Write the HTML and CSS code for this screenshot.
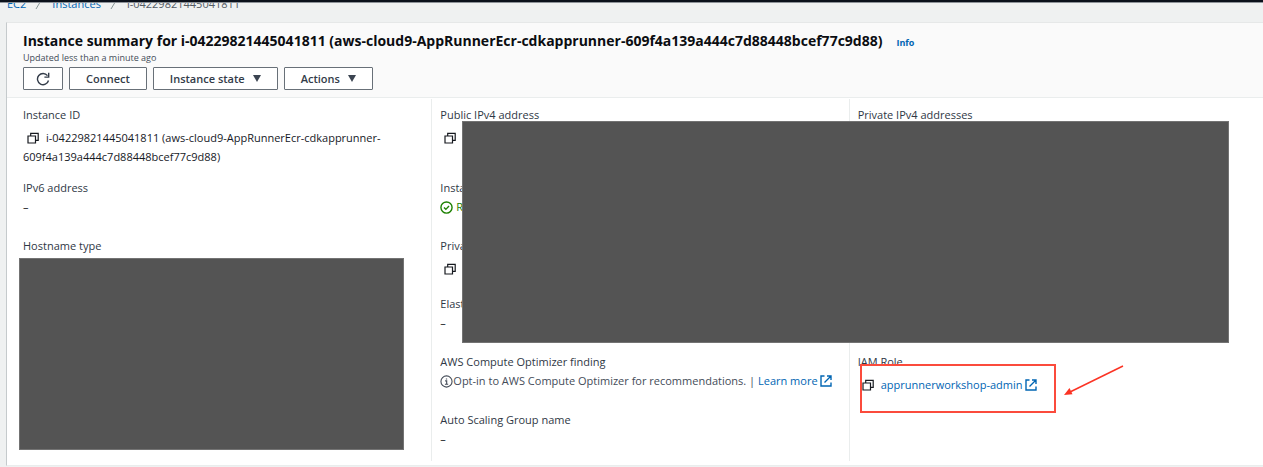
FILE: index.html
```
<!DOCTYPE html>
<html lang="en">
<head>
    <meta charset="UTF-8">
    <meta name="viewport" content="width=device-width, initial-scale=1.0">
    <title>Instance details | EC2</title>
    <link rel="stylesheet" href="styles.css">
</head>
<body>
    <!-- Shared icons -->
    <svg class="sprite" aria-hidden="true">
        <symbol id="icon-copy" viewBox="0 0 12 12">
            <path d="M1 4h7.500v7H1zM3.700 4V1.300h7.500v7H8.500" fill="none" stroke="currentColor" stroke-width="1.200"/>
        </symbol>
        <symbol id="icon-external" viewBox="0 0 12 12">
            <path d="M4.500 1H1v10h10V7.500M7 1h4v4M11 1L4.500 7.500" fill="none" stroke="currentColor" stroke-width="1.400"/>
        </symbol>
    </svg>

    <div class="topbar"></div>

    <nav class="breadcrumbs" aria-label="Breadcrumbs">
        <a href="#">EC2</a>
        <svg class="crumb-sep" viewBox="0 0 8 12"><path d="M1 11L7 1" fill="none" stroke="currentColor"/></svg>
        <a href="#">Instances</a>
        <svg class="crumb-sep" viewBox="0 0 8 12"><path d="M1 11L7 1" fill="none" stroke="currentColor"/></svg>
        <span>i-04229821445041811</span>
    </nav>

    <main class="card">
        <header class="card-header">
            <div class="title-row">
                <h1>Instance summary for i-04229821445041811 (aws-cloud9-AppRunnerEcr-cdkapprunner-609f4a139a444c7d88448bcef77c9d88)</h1>
                <a class="info" href="#">Info</a>
            </div>
            <p class="updated">Updated less than a minute ago</p>
            <div class="actions">
                <button class="btn btn-icon" type="button" aria-label="Refresh">
                    <svg viewBox="0 0 14 14">
                        <path d="M12.500 8.500A5.600 5.600 0 1 1 11.500 3.600M12.700 .8v4.300H8.400" fill="none" stroke="currentColor" stroke-width="1.400"/>
                    </svg>
                </button>
                <button class="btn" type="button">Connect</button>
                <button class="btn" type="button">Instance state <span class="caret"></span></button>
                <button class="btn" type="button">Actions <span class="caret"></span></button>
            </div>
        </header>

        <div class="details">
            <dl class="column">
                <div class="field">
                    <dt>Instance ID</dt>
                    <dd class="copyable"><button class="copy" type="button" aria-label="Copy"><svg class="icon"><use href="#icon-copy"/></svg></button>i-04229821445041811 (aws-cloud9-AppRunnerEcr-cdkapprunner-609f4a139a444c7d88448bcef77c9d88)</dd>
                </div>
                <div class="field">
                    <dt>IPv6 address</dt>
                    <dd>–</dd>
                </div>
                <div class="field">
                    <dt>Hostname type</dt>
                </div>
            </dl>

            <dl class="column">
                <div class="field">
                    <dt>Public IPv4 address</dt>
                    <dd class="copyable"><button class="copy" type="button" aria-label="Copy"><svg class="icon"><use href="#icon-copy"/></svg></button></dd>
                </div>
                <div class="field">
                    <dt>Instance state</dt>
                    <dd class="running">
                        <svg class="status" viewBox="0 0 14 14">
                            <circle cx="7" cy="7" r="6" fill="none" stroke="currentColor" stroke-width="1.500"/>
                            <path d="M4.300 7l2 2 3.400-3.600" fill="none" stroke="currentColor" stroke-width="1.500"/>
                        </svg>
                        Running
                    </dd>
                </div>
                <div class="field">
                    <dt>Private IP DNS name</dt>
                    <dd class="copyable"><button class="copy" type="button" aria-label="Copy"><svg class="icon"><use href="#icon-copy"/></svg></button></dd>
                </div>
                <div class="field">
                    <dt>Elastic IP addresses</dt>
                    <dd>–</dd>
                </div>
                <div class="field">
                    <dt>AWS Compute Optimizer finding</dt>
                    <dd class="finding">
                        <svg class="status" viewBox="0 0 14 14">
                            <circle cx="7" cy="7" r="6" fill="none" stroke="currentColor" stroke-width="1.200"/>
                            <path d="M5.500 6.300h1.700v3.500M5.300 9.900h3.500M6.300 4.300h1.400" fill="none" stroke="currentColor" stroke-width="1.200"/>
                        </svg>
                        <span>Opt-in to AWS Compute Optimizer for recommendations. | <a href="#">Learn more <svg class="icon"><use href="#icon-external"/></svg></a></span>
                    </dd>
                </div>
                <div class="field">
                    <dt>Auto Scaling Group name</dt>
                    <dd>–</dd>
                </div>
            </dl>

            <dl class="column">
                <div class="field">
                    <dt>Private IPv4 addresses</dt>
                </div>
                <div class="field field-role">
                    <dt>IAM Role</dt>
                    <dd class="copyable"><button class="copy" type="button" aria-label="Copy"><svg class="icon"><use href="#icon-copy"/></svg></button><a href="#">apprunnerworkshop-admin <svg class="icon"><use href="#icon-external"/></svg></a></dd>
                </div>
            </dl>
        </div>

        <!-- Redactions and callout -->
        <div class="redaction redaction-host"></div>
        <div class="redaction redaction-network"></div>
        <div class="highlight"></div>
        <svg class="arrow" viewBox="0 0 60 32">
            <path d="M59 1L6 27" stroke="currentColor" stroke-width="1.500"/>
            <path d="M0 30l5.500-7 3 6.300z" fill="currentColor"/>
        </svg>
    </main>
</body>
</html>
```

FILE: styles.css
```
body {
    margin: 0;
    overflow: hidden;
    background-color: #eff1f1;
    color: #16191f;
    font-family: "Open Sans", "Noto Sans", sans-serif;
    font-size: 11px;
    line-height: 20px;
}
a {
    color: #0065b3;
    text-decoration: none;
}
.sprite {
    display: none;
}
.topbar {
    height: 2px;
    background-color: #0b111b;
    border-bottom: 1px solid #8d9298;
}

/* Breadcrumbs, scrolled partly under the top bar */
.breadcrumbs {
    display: flex;
    align-items: flex-end;
    gap: 9px;
    height: 9px;
    margin-bottom: 10px;
    padding-left: 7px;
    overflow: hidden;
    color: #545b64;
    line-height: 16px;
}
.crumb-sep {
    width: 8px;
    height: 12px;
    margin-bottom: 2px;
    color: #879596;
}

/* Card */
.card {
    position: relative;
    margin-left: 6px;
    background-color: white;
    border-left: 1px solid #c5cacc;
    border-top: 1px solid #e6e8e8;
    border-bottom: 1px solid #eaeded;
}
.card-header {
    padding: 8px 16px 7px;
    background-color: #fafafa;
    border-bottom: 1px solid #eaeded;
}
.title-row {
    display: flex;
    align-items: center;
    gap: 14px;
}
h1 {
    margin: 0;
    font-size: 14px;
    font-weight: 700;
    line-height: 20px;
    color: #0b0d11;
}
.info {
    font-size: 9px;
    font-weight: 700;
    line-height: 16px;
    padding-top: 4px;
}
.updated {
    margin: 0 0 3px;
    font-size: 9px;
    line-height: 13px;
    color: #444c58;
}
.actions {
    display: flex;
    gap: 6px;
}
.btn {
    display: flex;
    align-items: center;
    gap: 8px;
    height: 23px;
    padding: 0 16px;
    background-color: white;
    border: 1px solid #687078;
    border-radius: 1px;
    color: #333c49;
    font-family: inherit;
    font-size: 11px;
    font-weight: 600;
    cursor: pointer;
}
.btn-icon {
    padding: 0 12px;
}
.btn-icon svg {
    width: 14px;
    height: 14px;
}
.caret {
    border: 4px solid transparent;
    border-top: 7px solid #3b4451;
    border-bottom: 0;
}

/* Details grid */
.details {
    display: grid;
    grid-template-columns: repeat(3, 1fr);
    margin-right: -4px;
    padding: 1px 0 4px 8px;
}
.column {
    display: grid;
    grid-template-rows: minmax(73px, auto) repeat(4, minmax(58px, auto)) minmax(38px, auto);
    margin: 0;
    padding: 7px 8px 12px;
    border-right: 1px solid #eaeded;
}
.column:last-child {
    border-right: 0;
}
.field-role {
    grid-row: 5;
}
dt {
    line-height: 18px;
    color: #2f3845;
}
dd {
    margin: 0;
}
.copyable {
    padding-top: 4px;
    line-height: 19px;
}
.copy {
    margin: 0 7px 0 4px;
    padding: 0;
    background: none;
    border: 0;
    color: #16191f;
    line-height: 12px;
    cursor: pointer;
}
.icon {
    width: 12px;
    height: 12px;
    vertical-align: -2px;
}
.status {
    flex: none;
    width: 13px;
    height: 13px;
}
.running,
.finding {
    display: flex;
    align-items: center;
}
.running {
    gap: 3px;
    color: #1d8102;
}
.finding {
    color: #444c58;
    white-space: nowrap;
}

/* Drawn over the content */
.redaction {
    position: absolute;
    box-sizing: border-box;
    background-color: #545454;
    border: 1px solid #737373;
}
.redaction-host {
    top: 235px;
    left: 12px;
    width: 385px;
    height: 192px;
}
.redaction-network {
    top: 98px;
    left: 455px;
    width: 767px;
    height: 222px;
}
.highlight {
    position: absolute;
    box-sizing: border-box;
    top: 341px;
    left: 853px;
    width: 196px;
    height: 49px;
    border: 2px solid #fb4b3c;
    pointer-events: none;
}
.arrow {
    position: absolute;
    top: 342px;
    left: 1057px;
    width: 60px;
    height: 32px;
    color: #fb3324;
}
```
